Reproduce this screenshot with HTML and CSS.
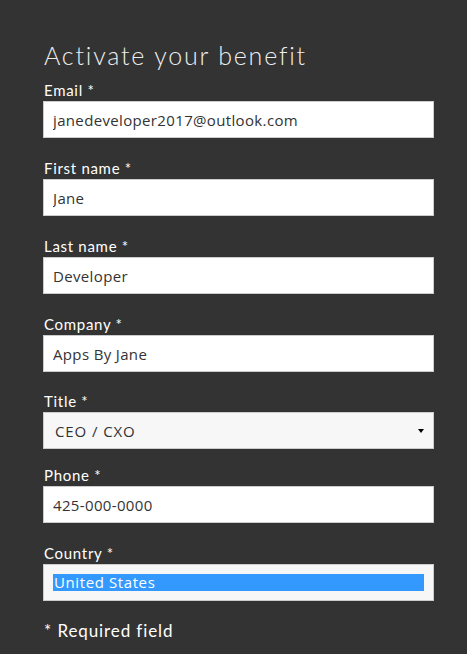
FILE: index.html
```html
<!DOCTYPE html>
<html lang="en">
<head>
<meta charset="utf-8">
<title>Activate your benefit</title>
<link rel="stylesheet" href="styles.css">
</head>
<body>
<form class="form">
  <h1 class="heading">Activate your benefit</h1>
  <div class="field">
    <label class="label" for="email">Email *</label>
    <input class="input" id="email" type="text" value="janedeveloper2017@outlook.com">
  </div>
  <div class="field">
    <label class="label" for="first">First name *</label>
    <input class="input" id="first" type="text" value="Jane">
  </div>
  <div class="field">
    <label class="label" for="last">Last name *</label>
    <input class="input" id="last" type="text" value="Developer">
  </div>
  <div class="field field-tight">
    <label class="label" for="company">Company *</label>
    <input class="input" id="company" type="text" value="Apps By Jane">
  </div>
  <div class="field field-short">
    <label class="label">Title *</label>
    <div class="select">
      <span class="select-value">CEO / CXO</span>
      <span class="caret"></span>
    </div>
  </div>
  <div class="field">
    <label class="label" for="phone">Phone *</label>
    <input class="input" id="phone" type="text" value="425-000-0000">
  </div>
  <div class="field field-last">
    <label class="label">Country *</label>
    <div class="listbox">
      <div class="option selected">United States</div>
    </div>
  </div>
  <p class="required">* Required field</p>
</form>
</body>
</html>
```

FILE: styles.css
```css
html, body {
  margin: 0;
  padding: 0;
  background: #333333;
}
body {
  width: 467px;
  height: 654px;
  overflow: hidden;
  font-family: Lato, "Open Sans", sans-serif;
}
.form {
  display: flex;
  flex-direction: column;
  padding: 40px 33px 0 43px;
}
.heading {
  margin: 0 0 11px 1px;
  font-family: Lato, sans-serif;
  font-weight: 300;
  font-size: 25px;
  line-height: 30px;
  letter-spacing: 1.8px;
  color: #eeeeee;
}
.field {
  display: flex;
  flex-direction: column;
  margin-bottom: 21px;
}
.field-tight { margin-bottom: 20px; }
.field-short { margin-bottom: 17px; }
.field-last { margin-bottom: 0; }
.label {
  display: block;
  margin: 0 0 2px 1px;
  font-size: 15px;
  line-height: 18px;
  color: #ffffff;
  letter-spacing: 0.7px;
}
.input {
  box-sizing: border-box;
  height: 37px;
  width: 391px;
  margin: 0;
  padding: 0 9px;
  border: 1px solid #cccccc;
  background: #ffffff;
  font-family: "Open Sans", sans-serif;
  font-size: 15px;
  letter-spacing: 0.35px;
  color: #333333;
  outline: none;
}
.select {
  box-sizing: border-box;
  height: 37px;
  width: 391px;
  padding: 0 9px 0 11px;
  border: 1px solid #cccccc;
  background: #f7f7f7;
  display: flex;
  align-items: center;
  justify-content: space-between;
  font-family: "Open Sans", sans-serif;
  font-size: 15px;
  letter-spacing: 0.9px;
  color: #333333;
}
.caret {
  width: 0;
  height: 0;
  border-left: 3px solid transparent;
  border-right: 3px solid transparent;
  border-top: 4px solid #000000;
}
.listbox {
  box-sizing: border-box;
  height: 37px;
  width: 391px;
  padding: 9px;
  border: 1px solid #cccccc;
  background: #f7f7f7;
}
.option {
  height: 17px;
  line-height: 17px;
  padding-left: 1px;
  font-family: "Open Sans", sans-serif;
  font-size: 15px;
  letter-spacing: 0.6px;
  color: #333333;
}
.option.selected {
  background: #3399ff;
  color: #ffffff;
}
.required {
  margin: 20px 0 0 1px;
  font-size: 17px;
  line-height: 20px;
  letter-spacing: 0.9px;
  color: #ffffff;
}
```
